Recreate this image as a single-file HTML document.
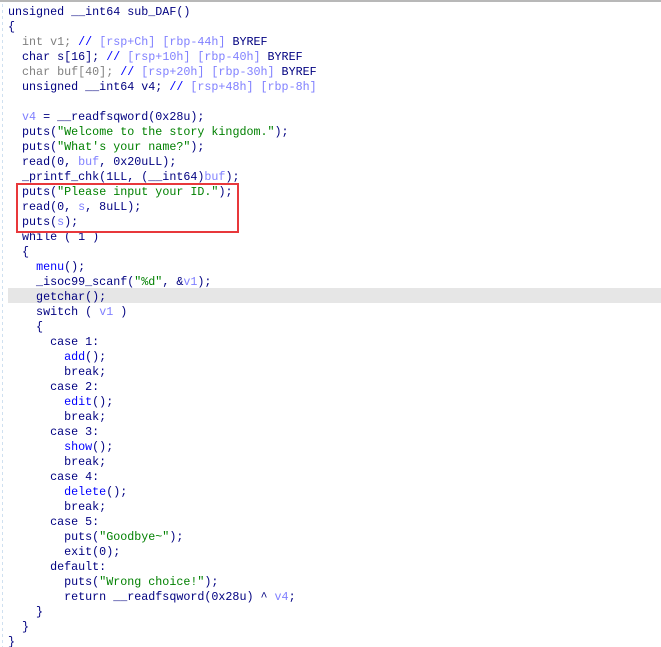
<!DOCTYPE html>
<html><head><meta charset="utf-8"><style>
html,body{margin:0;padding:0;background:#fff;width:661px;height:647px;overflow:hidden;position:relative}
.top{position:absolute;left:0;top:0;width:661px;height:2px;background:#b8b8b8}
.gut{position:absolute;left:2px;top:4px;width:1px;height:643px;background:repeating-linear-gradient(#cfe0f0 0 3px,transparent 3px 6px)}
.hl{position:absolute;left:8px;top:288px;width:653px;height:15px;background:#e6e6e6}
.box{position:absolute;left:16px;top:183px;width:219px;height:46px;border:2px solid #e8383b}
pre{position:absolute;left:8px;top:5px;margin:0;font-family:"Liberation Mono",monospace;font-size:11.7px;line-height:15px;color:#000080}
.g{color:#808080}.c{color:#0000ff}.v{color:#8080ff}.s{color:#008000}.f{color:#0000ff}
</style></head><body>
<div class="top"></div><div class="gut"></div><div class="hl"></div>
<pre>unsigned __int64 sub_DAF()
{
  <span class="g">int v1;</span> <span class="c">//</span> <span class="v">[rsp+Ch] [rbp-44h]</span> BYREF
  char s[16]; <span class="c">//</span> <span class="v">[rsp+10h] [rbp-40h]</span> BYREF
  <span class="g">char buf[40];</span> <span class="c">//</span> <span class="v">[rsp+20h] [rbp-30h]</span> BYREF
  unsigned __int64 v4; <span class="c">//</span> <span class="v">[rsp+48h] [rbp-8h]</span>

  <span class="v">v4</span> = __readfsqword(0x28u);
  puts(<span class="s">"Welcome to the story kingdom."</span>);
  puts(<span class="s">"What's your name?"</span>);
  read(0, <span class="v">buf</span>, 0x20uLL);
  _printf_chk(1LL, (__int64)<span class="v">buf</span>);
  puts(<span class="s">"Please input your ID."</span>);
  read(0, <span class="v">s</span>, 8uLL);
  puts(<span class="v">s</span>);
  while ( 1 )
  {
    <span class="f">menu</span>();
    _isoc99_scanf(<span class="s">"%d"</span>, &amp;<span class="v">v1</span>);
    getchar();
    switch ( <span class="v">v1</span> )
    {
      case 1:
        <span class="f">add</span>();
        break;
      case 2:
        <span class="f">edit</span>();
        break;
      case 3:
        <span class="f">show</span>();
        break;
      case 4:
        <span class="f">delete</span>();
        break;
      case 5:
        puts(<span class="s">"Goodbye~"</span>);
        exit(0);
      default:
        puts(<span class="s">"Wrong choice!"</span>);
        return __readfsqword(0x28u) ^ <span class="v">v4</span>;
    }
  }
}</pre>
<div class="box"></div>
</body></html>
